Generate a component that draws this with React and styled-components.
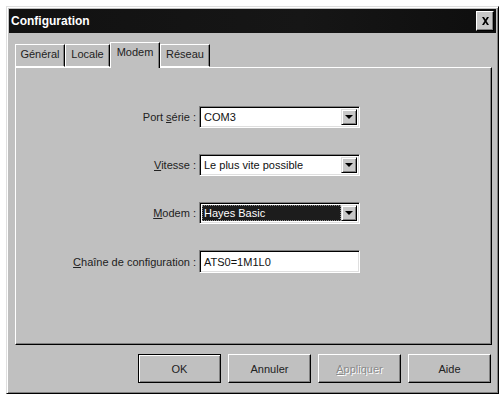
import React from 'react';
import styled, { createGlobalStyle } from 'styled-components';

const GlobalStyle = createGlobalStyle`
  body {
    margin: 0;
    background: #ffffff;
    font-family: "Liberation Sans", Arial, sans-serif;
  }
`;

const Window = styled.div`
  box-sizing: border-box;
  margin: 6px 0 0 6px;
  width: 493px;
  height: 388px;
  background: #c0c0c0;
  border: 1px solid;
  border-color: #dfdfdf #000 #000 #dfdfdf;
  box-shadow: inset 1px 1px 0 #fff, inset -1px -1px 0 #808080;
  padding: 2px;
  display: flex;
  flex-direction: column;
`;

const TitleBar = styled.div`
  height: 24px;
  background: linear-gradient(90deg, #111 0%, #161616 60%, #0e0e0e 100%);
  display: flex;
  align-items: center;
  justify-content: space-between;
  padding: 0 2px 0 2px;
`;

const Title = styled.span`
  color: #fff;
  font-weight: bold;
  font-size: 12px;
`;

const CloseButton = styled.div`
  box-sizing: border-box;
  width: 18px;
  height: 20px;
  background: #c8c8c8;
  border: 1px solid;
  border-color: #fff #000 #000 #fff;
  box-shadow: inset -1px -1px 0 #808080;
  display: flex;
  align-items: center;
  justify-content: center;
`;

const Body = styled.div`
  flex: 1;
  display: flex;
  flex-direction: column;
  padding: 9px 4px 0 6px;
`;

const TabStrip = styled.div`
  display: flex;
  align-items: flex-end;
  height: 26px;
  position: relative;
  z-index: 1;
  margin-bottom: -1px;
`;

const Tab = styled.div`
  box-sizing: border-box;
  width: ${(p) => p.w}px;
  height: ${(p) => (p.active ? 26 : 23)}px;
  padding-top: 3px;
  text-align: center;
  font-size: 11px;
  color: #222;
  background: #c0c0c0;
  border-top: 1px solid #fff;
  border-left: 1px solid #fff;
  border-right: 1px solid #000;
  box-shadow: inset -1px 0 0 #808080;
  border-bottom: ${(p) => (p.active ? 'none' : '1px solid #fff')};
  margin-bottom: ${(p) => (p.active ? 0 : 1)}px;
`;

const Panel = styled.div`
  box-sizing: border-box;
  height: 278px;
  border: 1px solid;
  border-color: #fff #000 #000 #fff;
  box-shadow: inset -1px -1px 0 #808080;
  padding-top: 38px;
`;

const Form = styled.div`
  display: grid;
  grid-template-columns: 180px 161px;
  column-gap: 3px;
  row-gap: 26px;
  align-items: center;
`;

const Label = styled.label`
  font-size: 11px;
  color: #222;
  text-align: right;
`;

const Key = styled.span`
  text-decoration: underline;
`;

const Combo = styled.div`
  box-sizing: border-box;
  height: 22px;
  background: #fff;
  border: 1px solid;
  border-color: #808080 #fff #fff #808080;
  box-shadow: inset 1px 1px 0 #000, inset -1px -1px 0 #dfdfdf;
  display: flex;
  align-items: center;
  padding: 2px;
`;

const ComboText = styled.div`
  flex: 1;
  height: 100%;
  display: flex;
  align-items: center;
  padding-left: 2px;
  font-size: 11px;
  color: ${(p) => (p.selected ? '#fff' : '#111')};
  background: ${(p) => (p.selected ? '#1c1c1c' : 'transparent')};
  outline: ${(p) => (p.selected ? '1px dotted #888' : 'none')};
  outline-offset: -1px;
`;

const DropButton = styled.div`
  box-sizing: border-box;
  width: 16px;
  height: 100%;
  background: #c8c8c8;
  border: 1px solid;
  border-color: #dfdfdf #000 #000 #dfdfdf;
  box-shadow: inset 1px 1px 0 #fff, inset -1px -1px 0 #808080;
  display: flex;
  align-items: center;
  justify-content: center;
`;

const Arrow = styled.span`
  width: 0;
  height: 0;
  border-left: 4px solid transparent;
  border-right: 4px solid transparent;
  border-top: 4px solid #000;
`;

const TextInput = styled(Combo)`
  height: 23px;
`;

const ButtonRow = styled.div`
  display: flex;
  justify-content: flex-end;
  gap: 7px;
  margin-top: 9px;
  padding-right: 1px;
`;

const Button = styled.div`
  box-sizing: border-box;
  width: 83px;
  height: 29px;
  display: flex;
  align-items: center;
  justify-content: center;
  font-size: 11px;
  background: #c0c0c0;
  color: ${(p) => (p.disabled ? '#8a8a8a' : '#222')};
  text-shadow: ${(p) => (p.disabled ? '1px 1px 0 #fff' : 'none')};
  border: 1px solid;
  border-color: ${(p) => (p.primary ? '#000' : '#fff #000 #000 #fff')};
  box-shadow: ${(p) =>
    p.primary
      ? 'inset 1px 1px 0 #fff, inset -1px -1px 0 #808080'
      : 'inset -1px -1px 0 #808080'};
`;

const tabs = [
  { name: 'Général', w: 50 },
  { name: 'Locale', w: 45 },
  { name: 'Modem', w: 50, active: true },
  { name: 'Réseau', w: 50 },
];

export default function App() {
  return (
    <>
      <GlobalStyle />
      <Window>
        <TitleBar>
          <Title>Configuration</Title>
          <CloseButton>
            <svg width="9" height="8" viewBox="0 0 9 8">
              <path d="M1 0h2l1.5 2.5L6 0h2L5.5 4 8 8H6L4.5 5.5 3 8H1l2.5-4z" fill="#000" />
            </svg>
          </CloseButton>
        </TitleBar>
        <Body>
          <TabStrip>
            {tabs.map((t) => (
              <Tab key={t.name} w={t.w} active={t.active}>
                {t.name}
              </Tab>
            ))}
          </TabStrip>
          <Panel>
            <Form>
              <Label>
                Port <Key>s</Key>érie :
              </Label>
              <Combo>
                <ComboText>COM3</ComboText>
                <DropButton>
                  <Arrow />
                </DropButton>
              </Combo>

              <Label>
                <Key>V</Key>itesse :
              </Label>
              <Combo>
                <ComboText>Le plus vite possible</ComboText>
                <DropButton>
                  <Arrow />
                </DropButton>
              </Combo>

              <Label>
                <Key>M</Key>odem :
              </Label>
              <Combo>
                <ComboText selected>Hayes Basic</ComboText>
                <DropButton>
                  <Arrow />
                </DropButton>
              </Combo>

              <Label>
                <Key>C</Key>haîne de configuration :
              </Label>
              <TextInput>
                <ComboText>ATS0=1M1L0</ComboText>
              </TextInput>
            </Form>
          </Panel>
          <ButtonRow>
            <Button primary>OK</Button>
            <Button>Annuler</Button>
            <Button disabled>
              <span>
                <Key>A</Key>ppliquer
              </span>
            </Button>
            <Button>Aide</Button>
          </ButtonRow>
        </Body>
      </Window>
    </>
  );
}
